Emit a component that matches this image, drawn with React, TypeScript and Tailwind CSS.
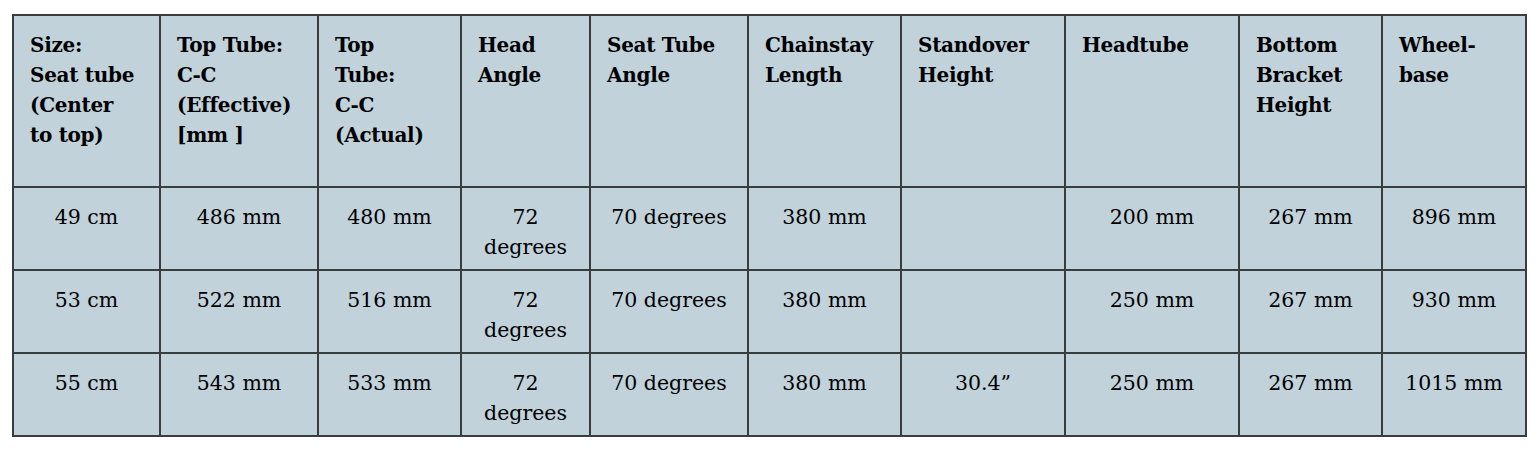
import React from 'react';

const cols = [147, 158, 143, 129, 158, 153, 164, 174, 143, 144];

const headers: string[][] = [
  ['Size:', 'Seat tube', '(Center', 'to top)'],
  ['Top Tube:', 'C-C', '(Effective)', '[mm ]'],
  ['Top', 'Tube:', 'C-C', '(Actual)'],
  ['Head', 'Angle'],
  ['Seat Tube', 'Angle'],
  ['Chainstay', 'Length'],
  ['Standover', 'Height'],
  ['Headtube'],
  ['Bottom', 'Bracket', 'Height'],
  ['Wheel-', 'base'],
];

const rows: string[][][] = [
  [['49 cm'], ['486 mm'], ['480 mm'], ['72', 'degrees'], ['70 degrees'], ['380 mm'], [], ['200 mm'], ['267 mm'], ['896 mm']],
  [['53 cm'], ['522 mm'], ['516 mm'], ['72', 'degrees'], ['70 degrees'], ['380 mm'], [], ['250 mm'], ['267 mm'], ['930 mm']],
  [['55 cm'], ['543 mm'], ['533 mm'], ['72', 'degrees'], ['70 degrees'], ['380 mm'], ['30.4\u201d'], ['250 mm'], ['267 mm'], ['1015 mm']],
];

export default function App() {
  return (
    <div className="w-[1538px] h-[450px] bg-white pt-[14px] pl-[12px]" style={{ fontFamily: '"DejaVu Serif", "Liberation Serif", serif' }}>
      <table className="table-fixed border-collapse bg-[#c1d2db] text-black">
        <colgroup>
          {cols.map((w, i) => (
            <col key={i} style={{ width: w }} />
          ))}
        </colgroup>
        <thead>
          <tr className="h-[172px]">
            {headers.map((lines, i) => (
              <th key={i} className="border-2 border-[#3a3d40] align-top text-left font-bold text-[20px] leading-[30px] px-[16px] pt-[14px] tracking-[-0.3px]">
                {lines.map((l, j) => (
                  <div key={j} className="whitespace-nowrap">{l}</div>
                ))}
              </th>
            ))}
          </tr>
        </thead>
        <tbody>
          {rows.map((r, i) => (
            <tr key={i} className="h-[83px]">
              {r.map((lines, j) => (
                <td key={j} className="border-2 border-[#3a3d40] align-top text-center text-[20.5px] leading-[30px] px-[4px] pt-[14px]">
                  {lines.map((l, k) => (
                    <div key={k} className="whitespace-nowrap">{l}</div>
                  ))}
                </td>
              ))}
            </tr>
          ))}
        </tbody>
      </table>
    </div>
  );
}
